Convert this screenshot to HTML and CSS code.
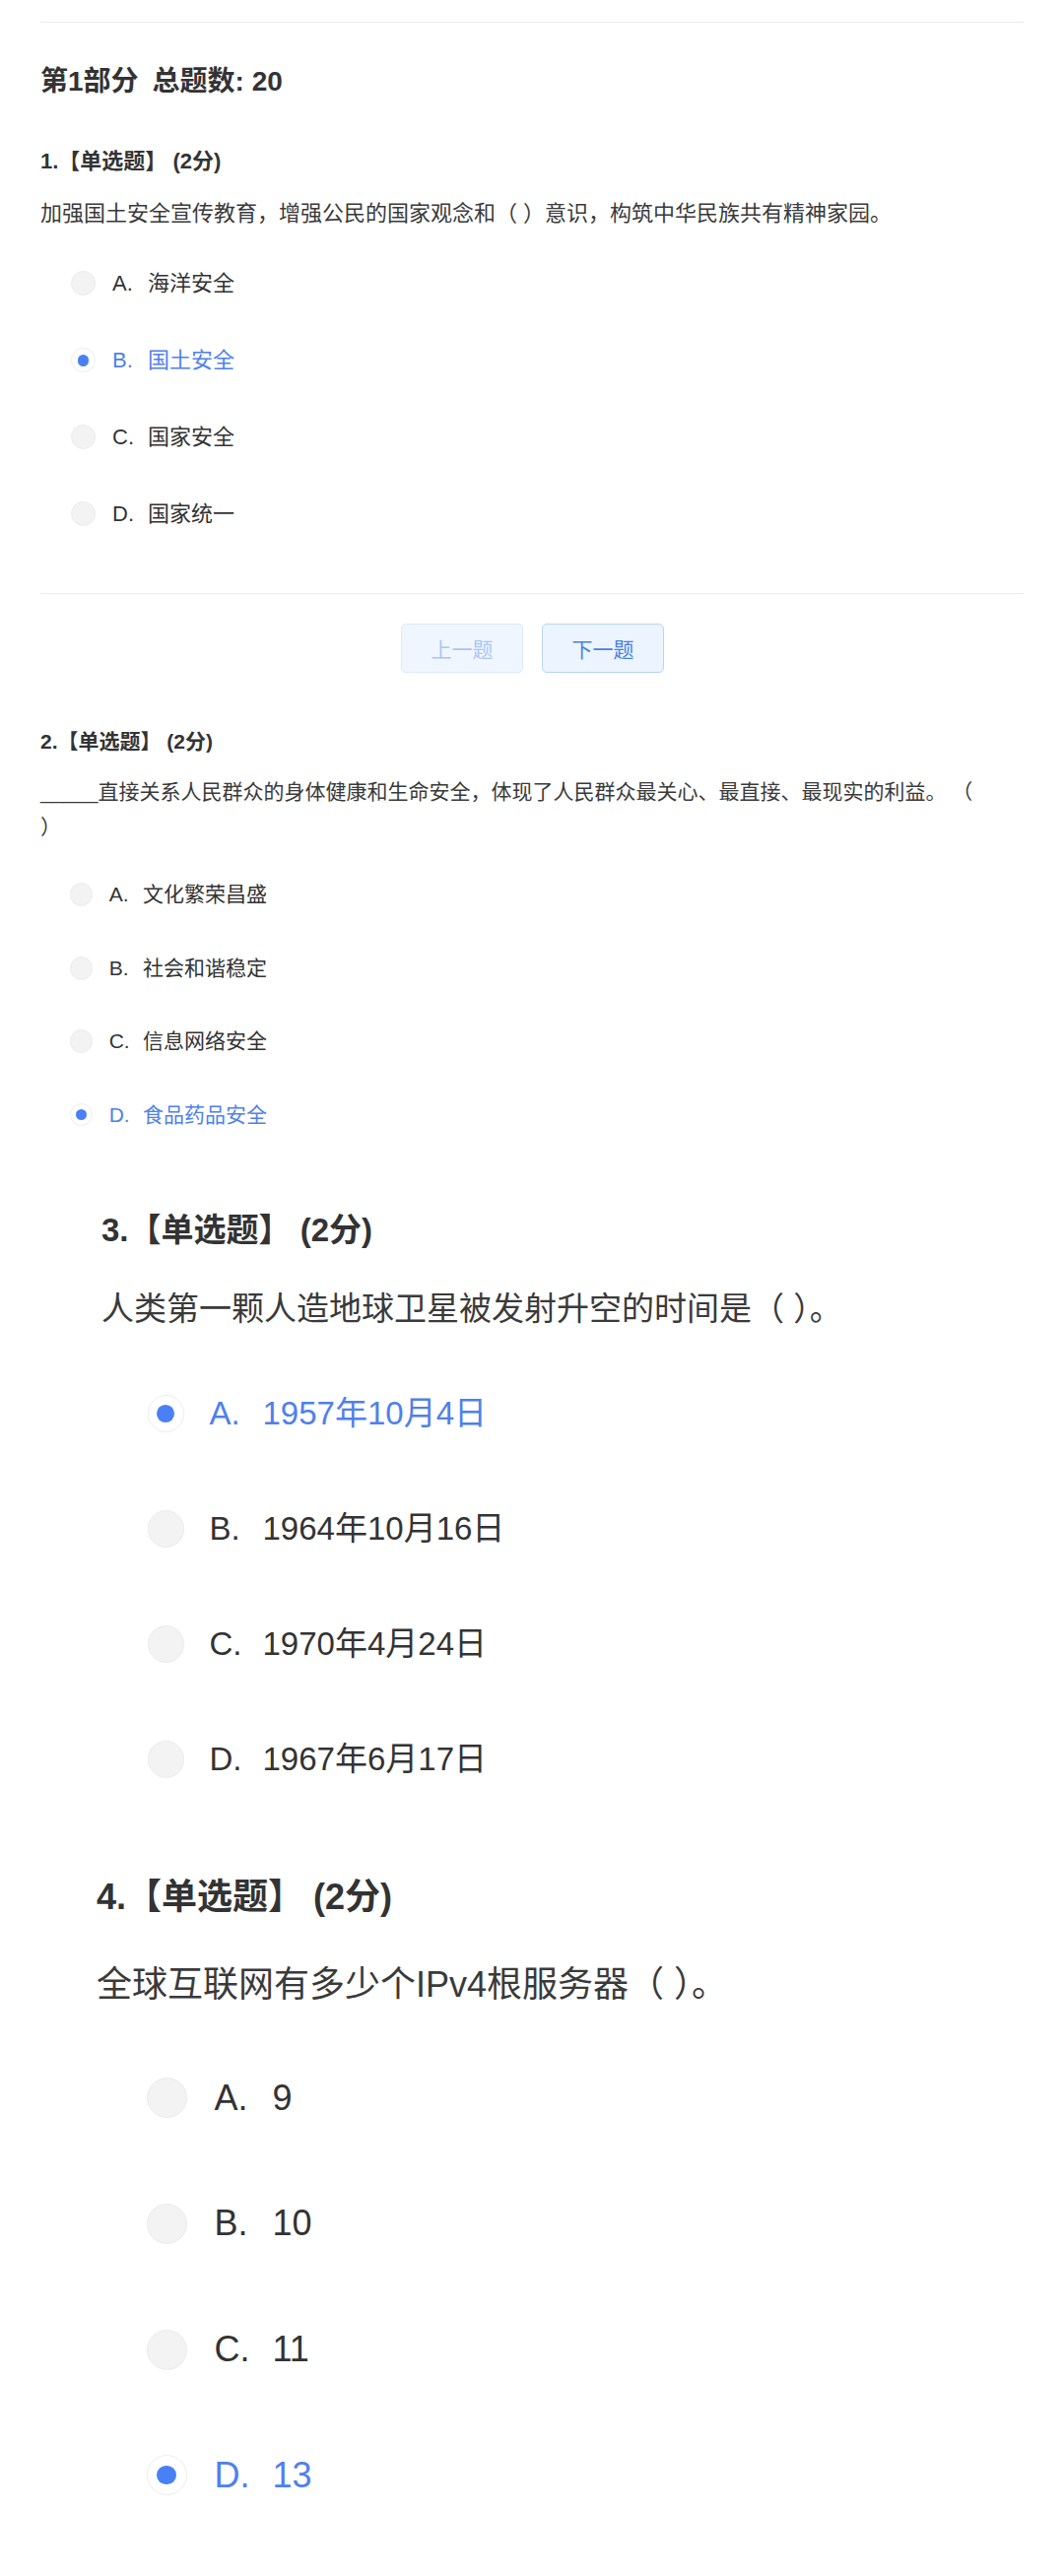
FILE: index.html
```html
<!DOCTYPE html>
<html lang="zh-CN">
<head>
<meta charset="utf-8">
<title>答题</title>
<link rel="stylesheet" href="styles.css">
</head>
<body>
<div class="page">
  <div class="rule rule-top"></div>
  <h2 class="part">第1部分<span class="gap"></span>总题数: 20</h2>

  <section class="q q-1">
    <h3 class="q-title">1.【单选题】 (2分)</h3>
    <p class="q-text">加强国土安全宣传教育，增强公民的国家观念和（ ）意识，构筑中华民族共有精神家园。</p>
    <ul class="opts">
      <li class="opt"><span class="radio"></span><span class="txt"><span class="lbl">A.</span>海洋安全</span></li>
      <li class="opt is-checked"><span class="radio"></span><span class="txt"><span class="lbl">B.</span>国土安全</span></li>
      <li class="opt"><span class="radio"></span><span class="txt"><span class="lbl">C.</span>国家安全</span></li>
      <li class="opt"><span class="radio"></span><span class="txt"><span class="lbl">D.</span>国家统一</span></li>
    </ul>
  </section>

  <div class="rule rule-mid"></div>
  <div class="pager">
    <button class="btn btn-disabled" type="button">上一题</button>
    <button class="btn" type="button">下一题</button>
  </div>

  <section class="q q-2">
    <h3 class="q-title">2.【单选题】 (2分)</h3>
    <p class="q-text"><span class="blank">_____</span>直接关系人民群众的身体健康和生命安全，体现了人民群众最关心、最直接、最现实的利益。 （<br>）</p>
    <ul class="opts">
      <li class="opt"><span class="radio"></span><span class="txt"><span class="lbl">A.</span>文化繁荣昌盛</span></li>
      <li class="opt"><span class="radio"></span><span class="txt"><span class="lbl">B.</span>社会和谐稳定</span></li>
      <li class="opt"><span class="radio"></span><span class="txt"><span class="lbl">C.</span>信息网络安全</span></li>
      <li class="opt is-checked"><span class="radio"></span><span class="txt"><span class="lbl">D.</span>食品药品安全</span></li>
    </ul>
  </section>

  <section class="q q-3">
    <h3 class="q-title">3.【单选题】 (2分)</h3>
    <p class="q-text">人类第一颗人造地球卫星被发射升空的时间是（ ）。</p>
    <ul class="opts">
      <li class="opt is-checked"><span class="radio"></span><span class="txt"><span class="lbl">A.</span>1957年10月4日</span></li>
      <li class="opt"><span class="radio"></span><span class="txt"><span class="lbl">B.</span>1964年10月16日</span></li>
      <li class="opt"><span class="radio"></span><span class="txt"><span class="lbl">C.</span>1970年4月24日</span></li>
      <li class="opt"><span class="radio"></span><span class="txt"><span class="lbl">D.</span>1967年6月17日</span></li>
    </ul>
  </section>

  <section class="q q-4">
    <h3 class="q-title">4.【单选题】 (2分)</h3>
    <p class="q-text">全球互联网有多少个IPv4根服务器（ ）。</p>
    <ul class="opts">
      <li class="opt"><span class="radio"></span><span class="txt"><span class="lbl">A.</span>9</span></li>
      <li class="opt"><span class="radio"></span><span class="txt"><span class="lbl">B.</span>10</span></li>
      <li class="opt"><span class="radio"></span><span class="txt"><span class="lbl">C.</span>11</span></li>
      <li class="opt is-checked"><span class="radio"></span><span class="txt"><span class="lbl">D.</span>13</span></li>
    </ul>
  </section>
</div>
</body>
</html>
```

FILE: styles.css
```css
* { box-sizing: border-box; }

html, body {
  margin: 0;
  padding: 0;
  background: #ffffff;
}

body {
  font-family: "Liberation Sans", "Noto Sans CJK SC", sans-serif;
  color: #333333;
}

.page {
  width: 1080px;
  padding: 0 40px 0 41px;
}

.rule {
  height: 1px;
  background: #ececec;
}

.rule-top { margin-top: 22px; }

.part {
  margin: 39px 0 0;
  font-size: 28px;
  line-height: 42px;
  font-weight: 700;
  color: #333333;
}

.gap {
  display: inline-block;
  width: 14px;
}

.q-1 { font-size: 22px; margin-top: 43px; }
.q-2 { font-size: 21px; margin-top: 54px; }
.q-3 { font-size: 33px; margin-top: 55px; padding-left: 62px; }
.q-4 { font-size: 36px; margin-top: 55px; padding-left: 57px; }

.q-title {
  margin: 0;
  font-size: 1em;
  line-height: 1.5em;
  font-weight: 700;
  color: #333333;
}

.q-text {
  margin: 0.82em 0 0;
  line-height: 1.76em;
  color: #3a3a3a;
}

.opts {
  list-style: none;
  margin: 0.55em 0 0;
  padding: 0;
}

.opt {
  display: flex;
  align-items: center;
  height: 3.545em;
  padding-left: 1.41em;
  color: #333333;
}

.radio {
  flex: none;
  width: 1.136em;
  height: 1.136em;
  border-radius: 50%;
  background: #f3f3f3;
  border: 1px solid #ececec;
  margin-right: 0.774em;
  display: flex;
  align-items: center;
  justify-content: center;
}

.txt {
  line-height: 1.5em;
  white-space: nowrap;
}

.lbl {
  display: inline-block;
  width: 1.636em;
}

.is-checked { color: #4f80ec; }

.is-checked .radio {
  background: #ffffff;
  border-color: #ededed;
}

.is-checked .radio::after {
  content: "";
  width: 0.54em;
  height: 0.54em;
  border-radius: 50%;
  background: #4a80f5;
}

.rule-mid { margin-top: 41px; }

.pager {
  display: flex;
  justify-content: center;
  gap: 19px;
  margin-top: 30px;
}

.btn {
  width: 124px;
  height: 50px;
  border-radius: 5px;
  font-family: "Liberation Sans", "Noto Sans CJK SC", sans-serif;
  font-size: 21px;
  background: #ecf4ff;
  border: 1px solid #b8d4f6;
  color: #4a7fe0;
  padding: 0;
}

.btn-disabled {
  background: #f0f6ff;
  border-color: #dde9fb;
  color: #a8c6f2;
}
```
